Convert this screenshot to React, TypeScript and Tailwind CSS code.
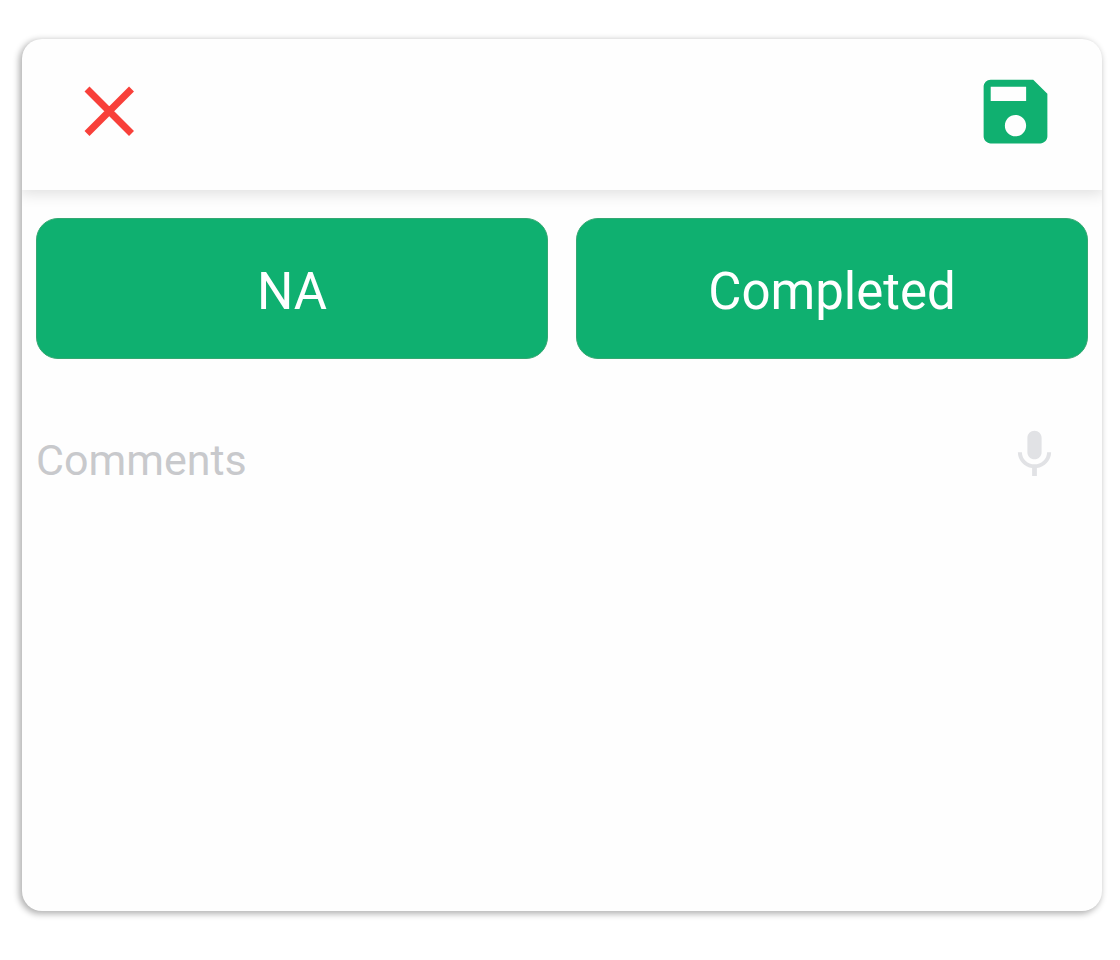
import React from "react";

function CloseIcon() {
  return (
    <svg viewBox="0 0 86 86" className="size-[86px]" aria-hidden="true">
      <path d="M21 21 65.5 65.5M65.5 21 21 65.5" stroke="#f8403a" strokeWidth="7" fill="none" />
    </svg>
  );
}

function SaveIcon() {
  return (
    <svg viewBox="0 0 24 24" className="size-[85px]" fill="#10b070" aria-hidden="true">
      <path d="M17 3H5c-1.11 0-2 .9-2 2v14c0 1.1.89 2 2 2h14c1.1 0 2-.9 2-2V7l-4-4zm-5 16c-1.66 0-3-1.34-3-3s1.34-3 3-3 3 1.34 3 3-1.34 3-3 3zm3-10H5V5h10v4z" />
    </svg>
  );
}

function MicIcon() {
  return (
    <svg viewBox="0 0 24 24" className="size-[57px]" fill="#e1e2e5" aria-hidden="true">
      <path d="M12 14c1.66 0 2.99-1.34 2.99-3L15 5c0-1.66-1.34-3-3-3S9 3.34 9 5v6c0 1.66 1.34 3 3 3zm5.3-3c0 3-2.54 5.1-5.3 5.1S6.7 14 6.7 11H5c0 3.41 2.72 6.23 6 6.72V21h2v-3.28c3.28-.48 6-3.3 6-6.72h-1.7z" />
    </svg>
  );
}

function StatusButton({ label }: { label: string }) {
  return (
    <button
      type="button"
      className="flex-1 rounded-[22px] border border-[#35a872] bg-[#0fb070] pt-[41px] pb-[35px] text-[51px] leading-[63px] text-white"
    >
      {label}
    </button>
  );
}

export default function App() {
  return (
    <main className="min-h-screen bg-white pt-[39px] pr-[18px] pb-12 pl-[22px] font-[Roboto,sans-serif]">
      <form
        className="overflow-hidden rounded-[20px] bg-[#fefefe] shadow-[-2px_2px_6px_1px_rgba(0,0,0,0.3)]"
        onSubmit={(event) => event.preventDefault()}
      >
        <header className="flex items-center justify-between px-11 pt-[29px] pb-9 shadow-[0_2px_14px_2px_rgba(0,0,0,0.12)]">
          <button type="button" aria-label="Close">
            <CloseIcon />
          </button>
          <button type="submit" aria-label="Save">
            <SaveIcon />
          </button>
        </header>
        <div className="flex gap-7 px-3.5 pt-7">
          <StatusButton label="NA" />
          <StatusButton label="Completed" />
        </div>
        <div className="flex items-start pt-[67px] pr-[39px] pb-[21px] pl-3.5">
          <textarea
            aria-label="Comments"
            placeholder="Comments"
            rows={8}
            className="min-w-0 flex-1 resize-none bg-transparent pt-1.5 pb-0.5 text-[43px] leading-[57px] text-[#55565a] outline-none placeholder:text-[#c8c9cc]"
          />
          <button type="button" aria-label="Dictate comments">
            <MicIcon />
          </button>
        </div>
      </form>
    </main>
  );
}
